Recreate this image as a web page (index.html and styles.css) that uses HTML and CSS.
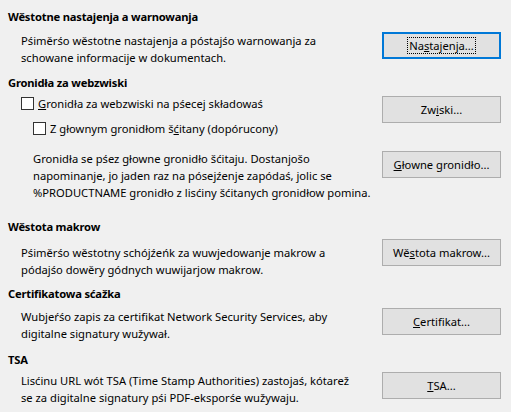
FILE: index.html
```html
<!DOCTYPE html>
<html lang="dsb">
<head>
<meta charset="utf-8">
<title>Wěstota</title>
<link rel="stylesheet" href="styles.css">
</head>
<body>
<div class="page">
  <section class="sec sec1">
    <h2 class="head">Wěstotne nastajenja a warnowanja</h2>
    <div class="row">
      <div class="left">
        <p class="text">Pśiměrśo wěstotne nastajenja a póstajśo warnowanja za<br>schowane informacije w dokumentach.</p>
      </div>
      <div class="right">
        <button class="btn focus"><span class="lbl">Na<u>s</u>tajenja...</span></button>
      </div>
    </div>
  </section>

  <section class="sec sec2">
    <h2 class="head">Gronidła za webzwiski</h2>
    <div class="row">
      <div class="left">
        <label class="check"><span class="box"></span><span><u>G</u>ronidła za webzwiski na pśecej składowaś</span></label>
        <label class="check sub"><span class="box"></span><span>Z głownym gronidłom š<u>ć</u>itany (dopórucony)</span></label>
        <p class="text sub note">Gronidła se pśez głowne gronidło šćitaju. Dostanjošo<br>napominanje, jo jaden raz na pósejźenje zapódaś, jolic se<br>%PRODUCTNAME gronidło z lisćiny šćitanych gronidłow pomina.</p>
      </div>
      <div class="right">
        <button class="btn b-zwiski">Zw<u>i</u>ski...</button>
        <button class="btn b-glowne"><u>G</u>łowne gronidło...</button>
      </div>
    </div>
  </section>

  <section class="sec sec3">
    <h2 class="head">Wěstota makrow</h2>
    <div class="row">
      <div class="left">
        <p class="text shift">Pśiměrśo wěstotny schójźeńk za wuwjedowanje makrow a<br>pódajśo dowěry gódnych wuwijarjow makrow.</p>
      </div>
      <div class="right">
        <button class="btn">Wě<u>s</u>tota makrow...</button>
      </div>
    </div>
  </section>

  <section class="sec sec4">
    <h2 class="head">Certifikatowa sćažka</h2>
    <div class="row">
      <div class="left">
        <p class="text">Wubjeŕśo zapis za certifikat Network Security Services, aby<br>digitalne signatury wužywał.</p>
      </div>
      <div class="right">
        <button class="btn b-down"><u>C</u>ertifikat...</button>
      </div>
    </div>
  </section>

  <section class="sec sec5">
    <h2 class="head">TSA</h2>
    <div class="row">
      <div class="left">
        <p class="text">Lisćinu URL wót TSA (Time Stamp Authorities) zastojaś, kótarež<br>se za digitalne signatury pśi PDF-eksporśe wužywaju.</p>
      </div>
      <div class="right">
        <button class="btn b-down"><u>T</u>SA...</button>
      </div>
    </div>
  </section>
</div>
</body>
</html>
```

FILE: styles.css
```css
html, body {
  margin: 0;
  padding: 0;
  background: #f0f0f0;
}
body {
  font-family: "Noto Sans", "Open Sans", "DejaVu Sans", sans-serif;
  font-size: 11.2px;
  line-height: 17px;
  color: #000;
}
.page {
  width: 511px;
  height: 412px;
  padding: 8px 10px 0 8px;
  box-sizing: border-box;
  overflow: hidden;
}
.head {
  margin: 0;
  font-size: 11.2px;
  font-weight: 700;
  line-height: 17px;
  letter-spacing: -0.2px;
}
.row {
  display: flex;
  justify-content: space-between;
  align-items: flex-start;
}
.left {
  display: flex;
  flex-direction: column;
  padding-left: 13px;
}
.right {
  display: flex;
  flex-direction: column;
  width: 119px;
}
.text {
  margin: 0;
}
.sec1 .row { margin-top: 7px; }
.sec2 { margin-top: 8px; }
.sec2 .row { margin-top: 4px; }
.sec3 { margin-top: 17px; }
.sec3 .row { margin-top: 4px; }
.sec4 { margin-top: 7px; }
.sec4 .row { margin-top: 6px; }
.sec5 { margin-top: 9px; }
.sec5 .row { margin-top: 4px; }

.shift { margin-top: 5px; }

.check {
  display: flex;
  align-items: center;
  gap: 4px;
  height: 17px;
}
.check.sub { margin-top: 8px; }
.sub { margin-left: 12px; }
.note { margin-top: 13px; }
.box {
  width: 11px;
  height: 11px;
  border: 1px solid #333;
  background: #fff;
  flex: none;
}

.btn {
  font: inherit;
  color: #000;
  height: 27px;
  width: 119px;
  padding: 0;
  background: #e1e1e1;
  border: 1px solid #adadad;
  border-radius: 0;
  display: flex;
  align-items: center;
  justify-content: center;
}
.btn.focus {
  border: 2px solid #0078d7;
}
.lbl {
  border: 1px dotted #000;
  padding: 0 1px;
  line-height: 15px;
}
.b-zwiski { margin-top: 1px; }
.b-glowne { margin-top: 28px; }
.b-down { margin-top: 0; }
u {
  text-decoration: underline;
  text-underline-offset: 1px;
}
```
